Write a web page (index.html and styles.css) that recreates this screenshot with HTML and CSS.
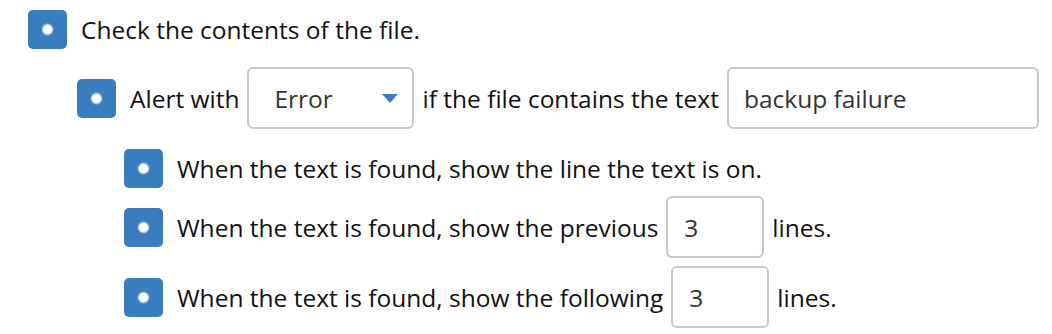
FILE: index.html
```html
<!DOCTYPE html>
<html lang="en">
<head>
    <meta charset="UTF-8">
    <meta name="viewport" content="width=device-width, initial-scale=1.0">
    <title>File Check Rule</title>
    <link rel="stylesheet" href="styles.css">
</head>
<body>
    <div class="rules">
        <div class="rule level-0 row-1">
            <span class="check"></span>
            <span class="label">Check the contents of the file.</span>
        </div>
        <div class="rule level-1 row-2">
            <span class="check"></span>
            <span class="label">Alert with</span>
            <div class="select">
                <span class="select-value">Error</span>
                <span class="select-arrow"></span>
            </div>
            <span class="label">if the file contains the text</span>
            <input type="text" class="field field-wide" value="backup failure">
        </div>
        <div class="rule level-2 row-3">
            <span class="check"></span>
            <span class="label">When the text is found, show the line the text is on.</span>
        </div>
        <div class="rule level-2 row-4">
            <span class="check"></span>
            <span class="label">When the text is found, show the previous</span>
            <input type="text" class="field field-small" value="3">
            <span class="label">lines.</span>
        </div>
        <div class="rule level-2 row-5">
            <span class="check"></span>
            <span class="label">When the text is found, show the following</span>
            <input type="text" class="field field-small" value="3">
            <span class="label">lines.</span>
        </div>
    </div>
</body>
</html>
```

FILE: styles.css
```css
body {
    margin: 0;
    font-family: "Open Sans", "Liberation Sans", sans-serif;
    font-size: 24.5px;
    color: #111;
    background-color: #fff;
}
.rules {
    display: flex;
    flex-direction: column;
}
.rule {
    display: flex;
    align-items: center;
    gap: 8px;
}
.level-0 { padding-left: 28px; }
.level-1 { padding-left: 77px; }
.level-2 { padding-left: 124px; }
.row-1 { margin-top: 10px; height: 39px; }
.row-2 { margin-top: 18px; height: 62px; }
.row-3 { margin-top: 20px; height: 39px; }
.row-4 { margin-top: 8px; height: 62px; }
.row-5 { margin-top: 8px; height: 62px; }
.check {
    flex: none;
    width: 39px;
    height: 39px;
    margin-right: 6px;
    border-radius: 5px;
    background: radial-gradient(circle at center, #fff 0, #fff 2px, rgba(255, 255, 255, 0.6) 4px, #3a7dbf 6.5px);
}
.label {
    white-space: nowrap;
}
.select {
    box-sizing: border-box;
    width: 167px;
    height: 62px;
    padding: 0 14px 0 25px;
    display: flex;
    align-items: center;
    justify-content: space-between;
    border: 2px solid #c8c8c8;
    border-radius: 6px;
    color: #333;
}
.select-arrow {
    width: 0;
    height: 0;
    border-left: 8px solid transparent;
    border-right: 8px solid transparent;
    border-top: 9px solid #3a7dbf;
}
.field {
    box-sizing: border-box;
    height: 62px;
    font: inherit;
    color: #333;
    border: 2px solid #c8c8c8;
    border-radius: 6px;
    outline: none;
}
.field-wide {
    width: 312px;
    padding: 0 15px;
}
.field-small {
    width: 98px;
    padding: 0 16px;
}
```
